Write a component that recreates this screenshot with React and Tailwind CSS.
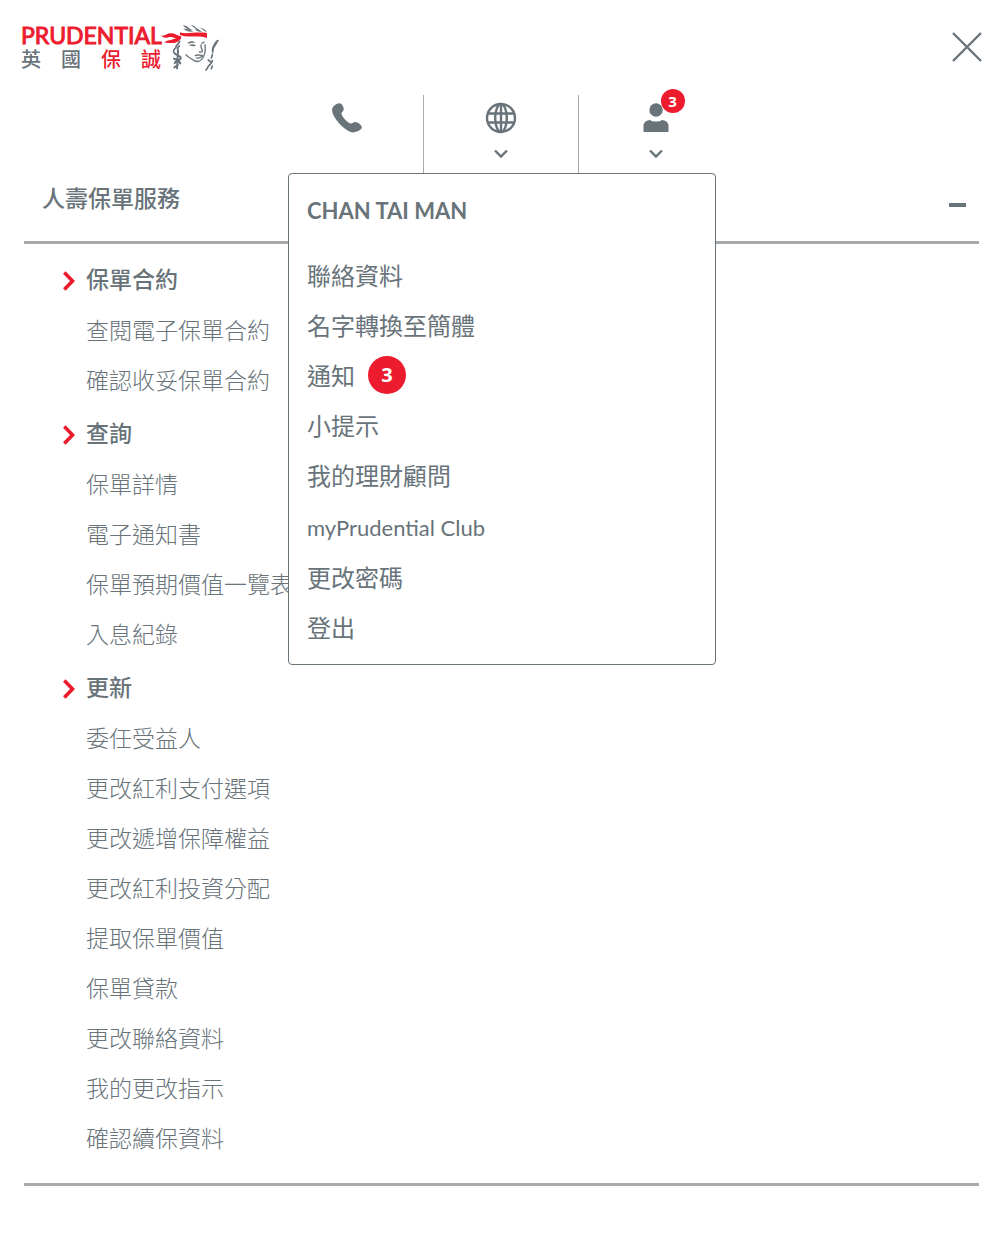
import { useState } from "react";

const policySections = [
  {
    title: "保單合約",
    links: ["查閱電子保單合約", "確認收妥保單合約"],
  },
  {
    title: "查詢",
    links: ["保單詳情", "電子通知書", "保單預期價值一覽表", "入息紀錄"],
  },
  {
    title: "更新",
    links: [
      "委任受益人",
      "更改紅利支付選項",
      "更改遞增保障權益",
      "更改紅利投資分配",
      "提取保單價值",
      "保單貸款",
      "更改聯絡資料",
      "我的更改指示",
      "確認續保資料",
    ],
  },
];

const notificationCount = 3;

const accountLinks = [
  { label: "聯絡資料" },
  { label: "名字轉換至簡體" },
  { label: "通知", count: notificationCount },
  { label: "小提示" },
  { label: "我的理財顧問" },
  { label: "myPrudential Club", latin: true },
  { label: "更改密碼" },
  { label: "登出" },
];

function Logo() {
  return (
    <a href="#" className="flex" aria-label="Prudential 英國保誠">
      <span className="w-[140px] shrink-0">
        <span className="block h-[25px] font-['Lato',sans-serif] text-[23px] leading-[22px] text-[#ed1b2e] [-webkit-text-stroke:1px_#ed1b2e]">
          PRUDENTIAL
        </span>
        <span className="flex justify-between text-[20px] leading-[20px] font-medium">
          <span>英</span>
          <span>國</span>
          <span className="text-[#ed1b2e]">保</span>
          <span className="text-[#ed1b2e]">誠</span>
        </span>
      </span>
      <svg viewBox="36 24 180 144" className="h-12 w-[60px]" aria-hidden="true">
        <g fill="#ed1b2e">
          <path d="M36 58C48 62 52 52 66 52C78 52 84 59 96 61C98 68 94 72 86 70C76 64 68 61 58 64C48 68 40 64 36 58Z" />
          <path d="M46 81C52 72 62 74 72 70C78 67 86 65 96 65C94 74 84 80 72 81C62 82 54 79 46 81Z" />
          <path d="M93 49C110 56 140 46 174 51L174 66C150 56 115 67 93 57Z" />
        </g>
        <g fill="#68737a">
          <path d="M101 28C116 28 118 38 131 43C120 44 110 37 101 28Z" />
          <path d="M104 39C114 37 122 43 134 46C123 49 111 45 104 39Z" />
          <path d="M124 27C138 27 141 38 152 43C141 44 137 33 124 27Z" />
          <path d="M138 41C148 37 151 43 159 47C151 49 144 44 138 41Z" />
          <path d="M152 35C163 36 171 41 173 49C166 46 163 40 152 35Z" />
          <path d="M115 83C121 73 132 75 140 80C132 80 124 80 115 83Z" />
          <path d="M119 88C127 83 135 84 141 89C134 92 126 90 119 88Z" />
          <path d="M157 80L167 76L166 81L157 84Z" />
          <path d="M211 71C200 70 196 81 191 91C187 99 187 107 191 114C194 112 194 107 194 103C195 94 204 86 206 79Z" />
        </g>
        <g fill="none" stroke="#68737a" strokeLinecap="round" strokeWidth="5">
          <path d="M156 87C154 93 159 99 160 104C160 108 156 109 151 108" strokeWidth="4" />
          <path d="M139 119C146 115 152 118 160 118M143 126C150 128 155 124 160 120" strokeWidth="4" />
          <path d="M168 86C170 102 169 118 158 130C151 138 143 138 135 133C125 128 117 124 111 116" strokeWidth="4" />
          <path d="M92 76C89 84 81 87 80 96M91 90C85 95 85 102 88 107M77 99C72 103 73 109 78 113" />
          <path d="M87 104L84 157M78 113C84 119 97 119 95 127C92 135 77 135 77 142M75 128C82 129 89 135 94 142M76 154L87 147" strokeWidth="6" />
          <path d="M190 116L187 126M178 132L184 137M190 134C189 143 181 146 177 152M190 150L187 158M176 155L171 162" />
        </g>
      </svg>
    </a>
  );
}

function CloseIcon() {
  return (
    <svg viewBox="0 0 30 30" className="size-[30px]" aria-hidden="true">
      <path d="M1 1L29 29M29 1L1 29" stroke="currentColor" strokeWidth="2.4" />
    </svg>
  );
}

function PhoneIcon() {
  return (
    <svg viewBox="0 0 30 30" className="size-[30px]" fill="currentColor" aria-hidden="true">
      <path d="M5 .8C6.6-.2 8.5 0 9.6 1.3C11 3 12 5 11.6 7C11.3 8.4 9.6 9 9.5 10.5C9.7 13.7 15.2 19.6 18.7 20.6C20.5 20.8 21.5 19.1 23.2 19.1C26 19.1 28.6 21.3 29.6 23.5C30.3 25.2 29.2 26.2 27.8 27.1C25.8 28.4 23.6 29.5 21 29.4C15.9 29.1 8.5 22.7 4.8 17.5C2.3 13.9-.3 10 .1 6.2C.4 3.8 2.8 2 5 .8Z" />
    </svg>
  );
}

function GlobeIcon() {
  return (
    <svg viewBox="0 0 32 32" className="size-8" fill="none" stroke="currentColor" strokeWidth="2.4" aria-hidden="true">
      <circle cx="16" cy="16" r="14" />
      <ellipse cx="16" cy="16" rx="5.8" ry="14" />
      <path d="M16 2V30M3 11.5H29M3 20.5H29" />
    </svg>
  );
}

function UserIcon() {
  return (
    <svg viewBox="0 0 26 30" className="h-[30px] w-[26px]" fill="currentColor" aria-hidden="true">
      <circle cx="13" cy="7" r="6.7" />
      <path d="M.5 29V22.5C.5 19.5 3.5 17 7.3 16.9C9 19 17 19 18.7 16.9C22.5 17 25.5 19.5 25.5 22.5V29Z" />
    </svg>
  );
}

function ChevronDown() {
  return (
    <svg viewBox="0 0 14 10" className="h-[10px] w-[14px]" fill="none" stroke="currentColor" strokeWidth="2.4" aria-hidden="true">
      <path d="M1 1.5L7 7.5L13 1.5" />
    </svg>
  );
}

function ChevronRight() {
  return (
    <svg viewBox="0 0 12 20" className="mt-[6px] h-5 w-3" fill="none" stroke="#ed1b2e" strokeWidth="3.6" aria-hidden="true">
      <path d="M1.3 1.5L9.5 10L1.3 18.5" />
    </svg>
  );
}

function AccountMenu() {
  return (
    <div className="absolute top-full left-[19px] z-10 w-[428px] rounded-[4px] border border-[#68737a] bg-white px-[18px] pt-[10px] pb-3">
      <h2 className="mb-[14px] flex h-[52px] items-center font-['Lato','Noto_Sans_CJK_TC',sans-serif] text-[22px] font-bold">
        CHAN TAI MAN
      </h2>
      <ul>
        {accountLinks.map((link) => (
          <li
            key={link.label}
            className={link.latin ? "flex h-[52px] items-center pt-[2px]" : "flex h-[50px] items-center"}
          >
            <a
              href="#"
              className={
                link.latin
                  ? "font-['Lato','Noto_Sans_CJK_TC',sans-serif] text-[22px]"
                  : "flex items-center gap-[13px] text-[24px] leading-8"
              }
            >
              {link.label}
              {link.count && (
                <span className="flex size-[38px] items-center justify-center rounded-full bg-[#ed1b2e] font-['Open_Sans'] text-[20px] font-bold text-white">
                  {link.count}
                </span>
              )}
            </a>
          </li>
        ))}
      </ul>
    </div>
  );
}

function App() {
  const [menuOpen, setMenuOpen] = useState(true);
  const [expanded, setExpanded] = useState(true);

  return (
    <div className="min-h-screen bg-white pr-[21px] pb-12 pl-6 font-['Noto_Sans_CJK_TC',sans-serif] text-[#68737a]">
      <header className="-mr-[3px] -ml-[3px] flex h-[95px] items-start justify-between pt-6">
        <Logo />
        <button type="button" className="mt-2" aria-label="關閉">
          <CloseIcon />
        </button>
      </header>

      <div className="relative mx-auto w-[465px]">
        <nav className="grid h-[78px] grid-cols-3 divide-x divide-[#a7a9ac]">
          <a href="#" className="flex flex-col items-center pt-2 pl-[2px]" aria-label="聯絡我們">
            <PhoneIcon />
          </a>
          <button type="button" className="flex flex-col items-center gap-[15px] pt-[7px]" aria-label="語言">
            <GlobeIcon />
            <ChevronDown />
          </button>
          <button
            type="button"
            className="flex flex-col items-center gap-4 pt-2 pr-[2px]"
            aria-label="我的帳戶"
            aria-expanded={menuOpen}
            onClick={() => setMenuOpen(!menuOpen)}
          >
            <span className="relative">
              <UserIcon />
              <span className="absolute -top-[14px] left-[18px] flex size-6 items-center justify-center rounded-full bg-[#ed1b2e] font-['Open_Sans'] text-[15px] font-bold text-white">
                {notificationCount}
              </span>
            </span>
            <ChevronDown />
          </button>
        </nav>
        {menuOpen && <AccountMenu />}
      </div>

      <main className="border-b-[3px] border-[#a7a9ac]">
        <button
          type="button"
          className="flex w-full items-start justify-between border-b-[3px] border-[#a7a9ac] pt-2 pr-[13px] pb-7 pl-[18px] text-[23px] leading-8 font-medium"
          aria-expanded={expanded}
          onClick={() => setExpanded(!expanded)}
        >
          人壽保單服務
          <span className="mt-[22px] h-1 w-[17px] bg-[#68737a]" />
        </button>

        {expanded && (
          <div className="flex flex-col gap-[2px] pt-2 pb-[21px] pl-[39px]">
            {policySections.map((section) => (
              <section key={section.title}>
                <h2 className="flex h-[52px] items-center gap-[11px] text-[23px] font-medium">
                  <ChevronRight />
                  {section.title}
                </h2>
                <ul className="pl-[23px]">
                  {section.links.map((label) => (
                    <li key={label} className="flex h-[50px] items-center">
                      <a href="#" className="text-[23px] font-light">
                        {label}
                      </a>
                    </li>
                  ))}
                </ul>
              </section>
            ))}
          </div>
        )}
      </main>
    </div>
  );
}

export default App;
